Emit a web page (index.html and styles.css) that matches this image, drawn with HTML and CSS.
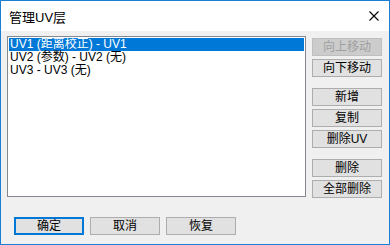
FILE: index.html
```html
<!DOCTYPE html>
<html lang="zh">
<head>
    <meta charset="UTF-8">
    <title>管理UV层</title>
    <link rel="stylesheet" href="styles.css">
</head>
<body>
    <div class="window">
        <div class="titlebar">
            <span class="title">管理UV层</span>
            <svg class="close" width="10" height="10" viewBox="0 0 10 10">
                <path d="M0.5 0.5 L9.5 9.5 M9.5 0.5 L0.5 9.5" stroke="#000" stroke-width="1.1" fill="none"/>
            </svg>
        </div>
        <div class="content">
            <div class="listbox">
                <div class="item selected">UV1 (距离校正) - UV1</div>
                <div class="item">UV2 (参数) - UV2 (无)</div>
                <div class="item">UV3 - UV3 (无)</div>
            </div>
            <div class="side">
                <div class="group">
                    <button class="btn" disabled>向上移动</button>
                    <button class="btn">向下移动</button>
                </div>
                <div class="group">
                    <button class="btn">新增</button>
                    <button class="btn">复制</button>
                    <button class="btn">删除UV</button>
                </div>
                <div class="group">
                    <button class="btn">删除</button>
                    <button class="btn">全部删除</button>
                </div>
            </div>
        </div>
        <div class="footer">
            <button class="btn default">确定</button>
            <button class="btn">取消</button>
            <button class="btn">恢复</button>
        </div>
    </div>
</body>
</html>
```

FILE: styles.css
```css
body {
    margin: 0;
    font-family: "Liberation Sans", "Noto Sans CJK SC", sans-serif;
    font-size: 12px;
}

.window {
    width: 390px;
    height: 245px;
    box-sizing: border-box;
    border: 1px solid #1a7fd4;
    background-color: #f0f0f0;
}

.titlebar {
    height: 30px;
    background-color: white;
    display: flex;
    align-items: center;
    justify-content: space-between;
    padding: 0 10px 0 8px;
}

.title {
    font-size: 13px;
    color: black;
}

.content {
    display: flex;
    gap: 6px;
    padding: 5px 0 0 6px;
}

.listbox {
    width: 299px;
    height: 161px;
    box-sizing: border-box;
    background-color: white;
    border: 1px solid #828790;
    padding: 1px;
}

.item {
    height: 13px;
    line-height: 13px;
    padding-left: 1px;
    white-space: nowrap;
}

.item.selected {
    background-color: #0078d7;
    color: white;
}

.side {
    display: flex;
    flex-direction: column;
    gap: 11px;
    padding-top: 2px;
}

.group {
    display: flex;
    flex-direction: column;
    gap: 3px;
}

.btn {
    width: 70px;
    height: 18px;
    box-sizing: border-box;
    padding: 0;
    background-color: #e1e1e1;
    border: 1px solid #adadad;
    font-family: "Liberation Sans", "Noto Sans CJK SC", sans-serif;
    font-size: 12px;
    line-height: 14px;
    color: black;
}

.btn:disabled {
    background-color: #cccccc;
    border-color: #bfbfbf;
    color: #a0a0a0;
}

.btn.default {
    border: 2px solid #0078d7;
}

.footer {
    display: flex;
    gap: 6px;
    padding: 19px 0 0 13px;
}
```
